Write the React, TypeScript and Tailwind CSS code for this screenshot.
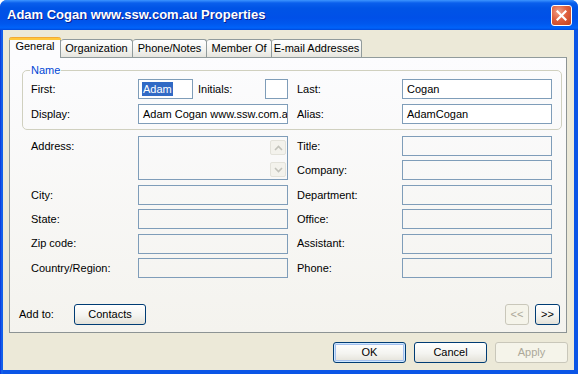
import React from "react";

const inputBase =
  "h-[20px] border border-[#7F9DB9] box-border overflow-hidden whitespace-nowrap pl-[4px] leading-[18px]";

function Chevron({ up }: { up?: boolean }) {
  return (
    <svg width="9" height="6" viewBox="0 0 9 6">
      <path
        d={up ? "M1 5 L4.5 1.5 L8 5" : "M1 1 L4.5 4.5 L8 1"}
        fill="none"
        stroke="#C2C2BA"
        strokeWidth="1.6"
      />
    </svg>
  );
}

export default function App() {
  return (
    <div className="w-[578px] h-[374px] bg-white font-['Liberation_Sans',Arial,sans-serif] text-[11px] text-black">
      <div className="flex h-full flex-col rounded-t-[7px] overflow-hidden bg-[linear-gradient(to_right,#0831D9_0px,#166AEE_2px,#0B55E6_3px)]">
        {/* Title bar */}
        <div className="h-[30px] shrink-0 flex items-center justify-between pl-[7px] pr-[6px] bg-[linear-gradient(to_bottom,#3D95FF_0px,#0A5FEC_3px,#0054E6_8px,#0050E8_18px,#0058EE_24px,#0063FA_28px,#0048DA_30px)]">
          <span className="text-white font-bold text-[13px] leading-[15px] pb-[1px] [text-shadow:1px_1px_0_#0A1E8C]">
            Adam Cogan www.ssw.com.au Properties
          </span>
          <div className="w-[21px] h-[21px] rounded-[3px] border border-white flex items-center justify-center bg-[radial-gradient(circle_at_35%_30%,#F0A18A_0%,#E0603F_45%,#C2401C_100%)]">
            <svg width="11" height="11" viewBox="0 0 11 11">
              <path d="M1.5 1.5 L9.5 9.5 M9.5 1.5 L1.5 9.5" stroke="white" strokeWidth="2.2" strokeLinecap="square" />
            </svg>
          </div>
        </div>

        {/* Body */}
        <div className="flex-1 ml-[3px] mr-[4px] mb-[4px] bg-[#ECE9D8] flex flex-col pl-[6px] pr-[7px]">
          {/* Tabs */}
          <div className="h-[27px] flex items-end">
            <div className="relative z-10 -mb-px w-[52px] h-[21px] border-x border-[#919B9C] rounded-t-[3px] bg-[#FCFCFE] flex justify-center">
              <div className="absolute left-[-1px] right-[-1px] top-0 h-[3px] rounded-t-[3px] bg-[linear-gradient(to_bottom,#E68B2C_0px,#FFC73C_1px,#FFC73C_3px)]" />
              <span className="mt-[3px] leading-[13px]">General</span>
            </div>
            <div className="w-[72px] h-[18px] border-t border-r border-[#919B9C] rounded-t-[3px] bg-[linear-gradient(to_bottom,#FFFFFF,#F3F3EF_60%,#E6E5DE)] flex justify-center">
              <span className="mt-[2px] leading-[13px]">Organization</span>
            </div>
            <div className="w-[74px] h-[18px] border-t border-r border-[#919B9C] rounded-t-[3px] bg-[linear-gradient(to_bottom,#FFFFFF,#F3F3EF_60%,#E6E5DE)] flex justify-center">
              <span className="mt-[2px] leading-[13px]">Phone/Notes</span>
            </div>
            <div className="w-[65px] h-[18px] border-t border-r border-[#919B9C] rounded-t-[3px] bg-[linear-gradient(to_bottom,#FFFFFF,#F3F3EF_60%,#E6E5DE)] flex justify-center">
              <span className="mt-[2px] leading-[13px]">Member Of</span>
            </div>
            <div className="w-[90px] h-[18px] border-t border-r border-[#919B9C] rounded-t-[3px] bg-[linear-gradient(to_bottom,#FFFFFF,#F3F3EF_60%,#E6E5DE)] flex justify-center">
              <span className="mt-[2px] leading-[13px]">E-mail Addresses</span>
            </div>
          </div>

          {/* Panel */}
          <div className="h-[276px] shrink-0 border border-[#919B9C] border-r-[#8C9394] border-b-[#8C9394] bg-[linear-gradient(to_bottom,#FCFCFE,#F4F3EE)] flex flex-col">
            <fieldset className="mt-[6px] ml-[12px] mr-[4px] border border-[#D0D0BF] rounded-[5px] pl-[8px] pr-[8px] pt-[3px] pb-[5px] flex flex-col gap-[5px]">
              <legend className="-ml-[1px] px-[1px] leading-[12px] text-[#0046D5]">Name</legend>
              <div className="flex items-center">
                <span className="w-[107px]">First:</span>
                <div className={`${inputBase} w-[55px] bg-white`}>
                  <span className="bg-[#316AC5] text-white inline-block leading-[14px] px-[1px] -ml-[1px]">Adam</span>
                </div>
                <span className="ml-[5px] w-[67px]">Initials:</span>
                <div className={`${inputBase} w-[23px] bg-white`} />
                <span className="ml-[9px] w-[105px]">Last:</span>
                <div className={`${inputBase} w-[150px] bg-white`}>Cogan</div>
              </div>
              <div className="flex items-center">
                <span className="w-[107px]">Display:</span>
                <div className={`${inputBase} w-[150px] bg-white`}>Adam Cogan www.ssw.com.au</div>
                <span className="ml-[9px] w-[105px]">Alias:</span>
                <div className={`${inputBase} w-[150px] bg-white`}>AdamCogan</div>
              </div>
            </fieldset>

            <div className="mt-[6px] ml-[21px] grid grid-cols-[107px_150px_114px_150px] grid-rows-[repeat(6,20px)] gap-y-[4.4px] items-center">
              <span className="col-start-1 row-start-1">Address:</span>
              <div className="col-start-2 row-start-1 row-span-2 self-stretch border border-[#7F9DB9] flex justify-end pt-[3px] pb-[2px] pr-[1px]">
                <div className="flex flex-col justify-between">
                  <div className="w-[16px] h-[15px] rounded-[2px] border border-[#E3E2DA] bg-[#F3F2EC] flex items-center justify-center">
                    <Chevron up />
                  </div>
                  <div className="w-[16px] h-[15px] rounded-[2px] border border-[#E3E2DA] bg-[#F3F2EC] flex items-center justify-center">
                    <Chevron />
                  </div>
                </div>
              </div>
              <span className="col-start-1 row-start-3">City:</span>
              <div className={`${inputBase} col-start-2 row-start-3`} />
              <span className="col-start-1 row-start-4">State:</span>
              <div className={`${inputBase} col-start-2 row-start-4`} />
              <span className="col-start-1 row-start-5">Zip code:</span>
              <div className={`${inputBase} col-start-2 row-start-5`} />
              <span className="col-start-1 row-start-6">Country/Region:</span>
              <div className={`${inputBase} col-start-2 row-start-6`} />

              <span className="col-start-3 row-start-1 pl-[9px]">Title:</span>
              <div className={`${inputBase} col-start-4 row-start-1`} />
              <span className="col-start-3 row-start-2 pl-[9px]">Company:</span>
              <div className={`${inputBase} col-start-4 row-start-2`} />
              <span className="col-start-3 row-start-3 pl-[9px]">Department:</span>
              <div className={`${inputBase} col-start-4 row-start-3`} />
              <span className="col-start-3 row-start-4 pl-[9px]">Office:</span>
              <div className={`${inputBase} col-start-4 row-start-4`} />
              <span className="col-start-3 row-start-5 pl-[9px]">Assistant:</span>
              <div className={`${inputBase} col-start-4 row-start-5`} />
              <span className="col-start-3 row-start-6 pl-[9px]">Phone:</span>
              <div className={`${inputBase} col-start-4 row-start-6`} />
            </div>

            <div className="flex-1" />
            <div className="flex items-center pl-[9px] pr-[6px] pb-[7px]">
              <span className="w-[55px]">Add to:</span>
              <div className="w-[72px] h-[21px] rounded-[3px] border border-[#003C74] bg-[linear-gradient(to_bottom,#FFFFFF,#F4F4F0_55%,#E3E1D8)] flex items-center justify-center">
                Contacts
              </div>
              <div className="flex-1" />
              <div className="w-[24px] h-[21px] rounded-[3px] border border-[#C9C7BA] bg-[#F5F4EA] text-[#ACA899] flex items-center justify-center">
                &lt;&lt;
              </div>
              <div className="ml-[6px] w-[25px] h-[21px] rounded-[3px] border border-[#003C74] bg-[linear-gradient(to_bottom,#FFFFFF,#F4F4F0_55%,#E3E1D8)] flex items-center justify-center">
                &gt;&gt;
              </div>
            </div>
          </div>

          {/* Dialog buttons */}
          <div className="mt-[9px] -mr-px flex justify-end gap-[8px]">
            <div className="w-[73px] h-[21px] rounded-[3px] border border-[#003C74] bg-[linear-gradient(to_bottom,#FFFFFF,#F4F4F0_55%,#E3E1D8)] shadow-[inset_0_0_0_1px_#CEE7FF,inset_0_0_0_2px_#A4C0EE] flex items-center justify-center">
              OK
            </div>
            <div className="w-[73px] h-[21px] rounded-[3px] border border-[#003C74] bg-[linear-gradient(to_bottom,#FFFFFF,#F4F4F0_55%,#E3E1D8)] flex items-center justify-center">
              Cancel
            </div>
            <div className="w-[73px] h-[21px] rounded-[3px] border border-[#C9C7BA] bg-[#F5F4EA] text-[#ACA899] flex items-center justify-center">
              Apply
            </div>
          </div>
        </div>
      </div>
    </div>
  );
}
